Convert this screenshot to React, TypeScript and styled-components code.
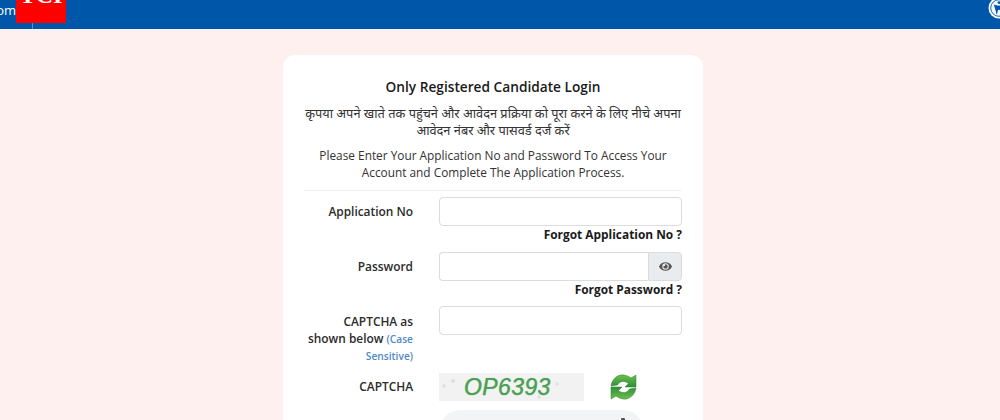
import React from "react";
import styled, { createGlobalStyle } from "styled-components";
import { FaEye } from "react-icons/fa";

const Global = createGlobalStyle`
  html, body { margin: 0; padding: 0; height: 420px; overflow: hidden; background: #fff0f0; }
  body { font-family: "Open Sans", "Noto Sans", "Liberation Sans", sans-serif; color: #212529; }
  * { box-sizing: border-box; }
`;

const Header = styled.header`
  height: 29px;
  background: #0056a8;
  display: flex;
  align-items: flex-start;
  overflow: hidden;
`;
const Crumb = styled.span`
  width: 16px;
  height: 29px;
  overflow: hidden;
  display: flex;
  justify-content: flex-end;
  color: #fff;
  font-size: 13px;
  line-height: 20px;
`;
const Logo = styled.div`
  width: 50px;
  height: 23px;
  background: #ff0000;
  color: #fff;
  font-family: "Liberation Serif", serif;
  font-weight: 700;
  font-size: 24px;
  line-height: 1;
  display: flex;
  justify-content: center;
  align-items: flex-end;
  padding-bottom: 16px;
  overflow: hidden;
`;
const Tick = styled.span`
  width: 1px;
  height: 6px;
  margin-top: 23px;
  margin-left: -34px;
  background: #5f8fc4;
`;
const Access = styled.span`
  margin-left: auto;
  margin-right: -10px;
  margin-top: -3px;
  display: flex;
`;

const Main = styled.main`
  display: flex;
  justify-content: center;
  padding: 26px 14px 0 0;
`;
const Card = styled.section`
  width: 420px;
  height: 420px;
  background: #fff;
  border-radius: 12px;
  padding: 22px 21px 0;
`;
const Title = styled.h1`
  margin: 0;
  text-align: center;
  font-size: 13.7px;
  font-weight: 600;
  line-height: 20px;
  color: #1a1a1a;
`;
const Hindi = styled.p`
  margin: 10px 0 0;
  text-align: center;
  font-size: 12.8px;
  line-height: 17px;
  color: #333;
  font-family: "Noto Sans Devanagari", "Noto Sans", "Open Sans", sans-serif;
`;
const Note = styled.p`
  margin: 6px 0 0;
  text-align: center;
  font-size: 11.85px;
  line-height: 17px;
  color: #333;
`;
const Rule = styled.hr`
  margin: 9px 0 6px;
  border: 0;
  border-top: 1px solid #f0f0f0;
`;
const Row = styled.div<{ $mt?: number }>`
  display: grid;
  grid-template-columns: 109px 1fr;
  column-gap: 26px;
  margin-top: ${(p) => p.$mt ?? 0}px;
`;
const Label = styled.label<{ $pt?: number }>`
  text-align: right;
  font-size: 11.9px;
  font-weight: 600;
  line-height: 17px;
  color: #2b2b2b;
  padding-top: ${(p) => p.$pt ?? 0}px;
`;
const Hint = styled.span`
  color: #4f8ac4;
  font-size: 10.2px;
  line-height: 1;
`;
const Field = styled.div`
  display: flex;
  flex-direction: column;
`;
const Input = styled.input`
  width: 100%;
  height: 29px;
  border: 1px solid #dcdcdc;
  border-radius: 4px;
  background: #fff;
  display: block;
`;
const Group = styled.div`
  display: flex;
  height: 29px;
`;
const GroupInput = styled.input`
  flex: 1;
  min-width: 0;
  border: 1px solid #dcdcdc;
  border-right: 0;
  border-radius: 4px 0 0 4px;
`;
const Addon = styled.span`
  width: 34px;
  background: #e9ecef;
  border: 1px solid #dcdcdc;
  border-radius: 0 4px 4px 0;
  color: #555;
  display: flex;
  align-items: center;
  justify-content: center;
`;
const Forgot = styled.a`
  text-align: right;
  font-size: 11.9px;
  font-weight: 700;
  line-height: 17px;
  color: #1a1a1a;
`;
const CaptchaLine = styled.div`
  display: flex;
  align-items: center;
  gap: 26px;
`;
const CaptchaImg = styled.div`
  width: 145px;
  height: 28px;
  background:
    radial-gradient(circle at 14px 8px, #ddd 0 1.5px, transparent 2px),
    radial-gradient(circle at 5px 13px, #e2e2e2 0 1.5px, transparent 2px),
    radial-gradient(circle at 118px 11px, #e2e2e2 0 1.5px, transparent 2px),
    radial-gradient(circle at 100px 24px, #e2e2e2 0 1.5px, transparent 2px),
    #f2f2f2;
  color: #4e9f57;
  font-family: "Liberation Sans", sans-serif;
  font-style: italic;
  font-size: 23px;
  letter-spacing: 0.4px;
  -webkit-text-stroke: 0.25px #3f9a4a;
  text-shadow: 0 0 1px #9ed6a2;
  display: flex;
  align-items: center;
  padding-left: 25px;
`;
const Pill = styled.div`
  width: 203px;
  height: 40px;
  margin-left: 1px;
  background: #f2f4f5;
  border-radius: 20px;
  display: flex;
  justify-content: flex-end;
  padding: 8px 18px 0 0;
`;
const PillMark = styled.span`
  width: 4px;
  height: 3px;
  background: #555;
  border-radius: 1px;
`;

export default function App() {
  return (
    <>
      <Global />
      <Header>
        <Crumb>om</Crumb>
        <Logo>TCI</Logo>
        <Tick />
        <Access>
          <svg width="22" height="22" viewBox="0 0 22 22" aria-hidden="true">
            <circle cx="11" cy="11" r="10.5" fill="#fff" />
            <circle cx="11" cy="11" r="8.3" fill="#f2f7fc" stroke="#0056a8" strokeWidth="0.9" />
            <circle cx="11" cy="5.6" r="1.4" fill="#0056a8" />
            <path d="M6 8 L9.8 9 V12.5 L8.6 17 M16 8 L12.2 9 V12.5 L13.4 17 M9.8 9 H12.2 V12.5 H9.8Z" fill="#0056a8" stroke="#0056a8" strokeWidth="0.8" />
          </svg>
        </Access>
      </Header>
      <Main>
        <Card>
          <Title>Only Registered Candidate Login</Title>
          <Hindi>कृपया अपने खाते तक पहुंचने और आवेदन प्रक्रिया को पूरा करने के लिए नीचे अपना आवेदन नंबर और पासवर्ड दर्ज करें</Hindi>
          <Note>Please Enter Your Application No and Password To Access Your Account and Complete The Application Process.</Note>
          <Rule />
          <Row>
            <Label $pt={6}>Application No</Label>
            <Field>
              <Input />
              <Forgot>Forgot Application No ?</Forgot>
            </Field>
          </Row>
          <Row $mt={9}>
            <Label $pt={6}>Password</Label>
            <Field>
              <Group>
                <GroupInput />
                <Addon>
                  <FaEye size={13} />
                </Addon>
              </Group>
              <Forgot>Forgot Password ?</Forgot>
            </Field>
          </Row>
          <Row $mt={8}>
            <Label $pt={7}>
              CAPTCHA as shown below <Hint>(Case Sensitive)</Hint>
            </Label>
            <Field>
              <Input />
            </Field>
          </Row>
          <Row $mt={9}>
            <Label $pt={5}>CAPTCHA</Label>
            <CaptchaLine>
              <CaptchaImg>OP6393</CaptchaImg>
              <svg width="27" height="28" viewBox="0 0 27 28" aria-hidden="true">
                <defs>
                  <linearGradient id="arrowGreen" x1="0" y1="0" x2="0" y2="1">
                    <stop offset="0" stopColor="#6cc04a" />
                    <stop offset="1" stopColor="#2f8f38" />
                  </linearGradient>
                </defs>
                <path d="M1 13 C2 6 8 1 14 2 C17 2.5 19 3.5 21 5 L26 2 V14 H15 L18.5 10.5 C15 7.5 10 7.5 7.5 12 Z" fill="url(#arrowGreen)" stroke="#2e7d32" strokeWidth="0.5" />
                <path d="M1 13 C2 6 8 1 14 2 C17 2.5 19 3.5 21 5 L26 2 V14 H15 L18.5 10.5 C15 7.5 10 7.5 7.5 12 Z" transform="rotate(180 13.5 14)" fill="url(#arrowGreen)" stroke="#2e7d32" strokeWidth="0.5" />
              </svg>
            </CaptchaLine>
          </Row>
          <Row $mt={9}>
            <Label $pt={8}>Fill CAPTCHA</Label>
            <Pill>
              <PillMark />
            </Pill>
          </Row>
        </Card>
      </Main>
    </>
  );
}
